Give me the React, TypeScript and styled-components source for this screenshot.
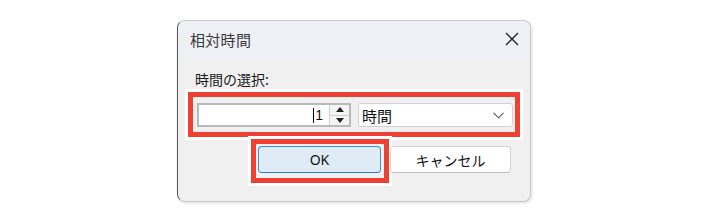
import React from "react";
import styled, { createGlobalStyle } from "styled-components";

const Global = createGlobalStyle`
  html, body { margin: 0; padding: 0; background: #ffffff; }
  body { font-family: "Noto Sans CJK JP", "Noto Sans", sans-serif; }
`;

const Page = styled.div`
  width: 708px;
  height: 221px;
  padding: 20px 0 0 177px;
  box-sizing: border-box;
`;

const Dialog = styled.div`
  width: 354px;
  height: 182px;
  box-sizing: border-box;
  border: 1px solid #c9c9c9;
  border-left-color: #555;
  border-radius: 8px;
  overflow: hidden;
  display: flex;
  flex-direction: column;
  background: #f0f0f0;
  box-shadow: 1px 1px 3px rgba(0, 0, 0, 0.15);
`;

const TitleBar = styled.div`
  height: 38px;
  flex: none;
  background: #eef0f5;
  display: flex;
  align-items: center;
  justify-content: space-between;
  padding: 0 11px 2px 12px;
  box-sizing: border-box;
`;

const Title = styled.span`
  font-size: 15px;
  color: #3a3a3a;
  letter-spacing: 0.3px;
`;

const Close = styled.svg`
  width: 14px;
  height: 14px;
`;

const Body = styled.div`
  flex: 1;
  padding: 10px 0 0 10px;
  display: flex;
  flex-direction: column;
  align-items: flex-start;
`;

const Label = styled.div`
  font-size: 14px;
  line-height: 20px;
  color: #1a1a1a;
  margin-left: 7px;
`;

const Highlight = styled.div<{ $pad: string; $gap?: number }>`
  border: 5px solid #ef4133;
  box-shadow: 0 0 0 3px #ffffff;
  padding: ${(p) => p.$pad};
  display: flex;
  align-items: center;
  gap: ${(p) => p.$gap ?? 0}px;
`;

const InputRow = styled.div`
  display: flex;
  margin-top: 3px;
`;

const SpinBox = styled.div`
  width: 154px;
  height: 24px;
  box-sizing: border-box;
  border: 2px solid #b9b9b9;
  background: #ffffff;
  display: flex;
  align-items: stretch;
`;

const SpinText = styled.div`
  flex: 1;
  display: flex;
  align-items: center;
  justify-content: flex-end;
  padding-right: 6px;
  font-family: "Liberation Sans", sans-serif;
  font-size: 14px;
  color: #111;
`;

const Caret = styled.span`
  width: 1px;
  height: 15px;
  background: #000;
  margin-right: 1px;
`;

const Spinner = styled.div`
  width: 19px;
  display: flex;
  flex-direction: column;
  border-left: 1px solid #cfcfcf;
  background: #f4f4f4;
`;

const SpinHalf = styled.div<{ $top?: boolean }>`
  flex: 1;
  display: flex;
  align-items: center;
  justify-content: center;
  border-bottom: ${(p) => (p.$top ? "1px solid #cfcfcf" : "none")};
`;

const Combo = styled.div`
  width: 155px;
  height: 24px;
  box-sizing: border-box;
  border: 1px solid #d2d2d2;
  border-radius: 3px;
  background: #ffffff;
  display: flex;
  align-items: center;
  justify-content: space-between;
  padding: 0 8px 0 3px;
  font-size: 15px;
  color: #111;
`;

const ButtonRow = styled.div`
  display: flex;
  align-items: flex-start;
  margin-top: 2px;
  margin-left: 63px;
`;

const Button = styled.div<{ $primary?: boolean }>`
  height: 27px;
  box-sizing: border-box;
  border: 1px solid ${(p) => (p.$primary ? "#3f8fcb" : "#d3d3d3")};
  border-bottom-color: ${(p) => (p.$primary ? "#2f7fbf" : "#bdbdbd")};
  border-radius: 4px;
  background: ${(p) => (p.$primary ? "#e0ecf5" : "#ffffff")};
  display: flex;
  align-items: center;
  justify-content: center;
  font-size: 14px;
  color: #111;
`;

const OkButton = styled(Button)`
  width: 123px;
  font-family: "Noto Sans", sans-serif;
`;

const CancelButton = styled(Button)`
  width: 121px;
  margin-top: 7px;
  margin-left: 1px;
`;

export default function App() {
  return (
    <>
      <Global />
      <Page>
        <Dialog>
          <TitleBar>
            <Title>相対時間</Title>
            <Close viewBox="0 0 14 14">
              <path d="M1 1 L13 13 M13 1 L1 13" stroke="#222" strokeWidth="1.3" fill="none" />
            </Close>
          </TitleBar>
          <Body>
            <Label>時間の選択:</Label>
            <InputRow>
              <Highlight $pad="6px 2px 5px 4px" $gap={7}>
                <SpinBox>
                  <SpinText>
                    <Caret />1
                  </SpinText>
                  <Spinner>
                    <SpinHalf $top>
                      <svg width="8" height="5" viewBox="0 0 8 5">
                        <path d="M0 5 L4 0 L8 5 Z" fill="#222" />
                      </svg>
                    </SpinHalf>
                    <SpinHalf>
                      <svg width="8" height="5" viewBox="0 0 8 5">
                        <path d="M0 0 L8 0 L4 5 Z" fill="#222" />
                      </svg>
                    </SpinHalf>
                  </Spinner>
                </SpinBox>
                <Combo>
                  <span>時間</span>
                  <svg width="11" height="7" viewBox="0 0 11 7">
                    <path d="M0.5 0.8 L5.5 5.8 L10.5 0.8" stroke="#555" strokeWidth="1.1" fill="none" />
                  </svg>
                </Combo>
              </Highlight>
            </InputRow>
            <ButtonRow>
              <Highlight $pad="2px 3px 5px 2px">
                <OkButton $primary>OK</OkButton>
              </Highlight>
              <CancelButton>キャンセル</CancelButton>
            </ButtonRow>
          </Body>
        </Dialog>
      </Page>
    </>
  );
}
